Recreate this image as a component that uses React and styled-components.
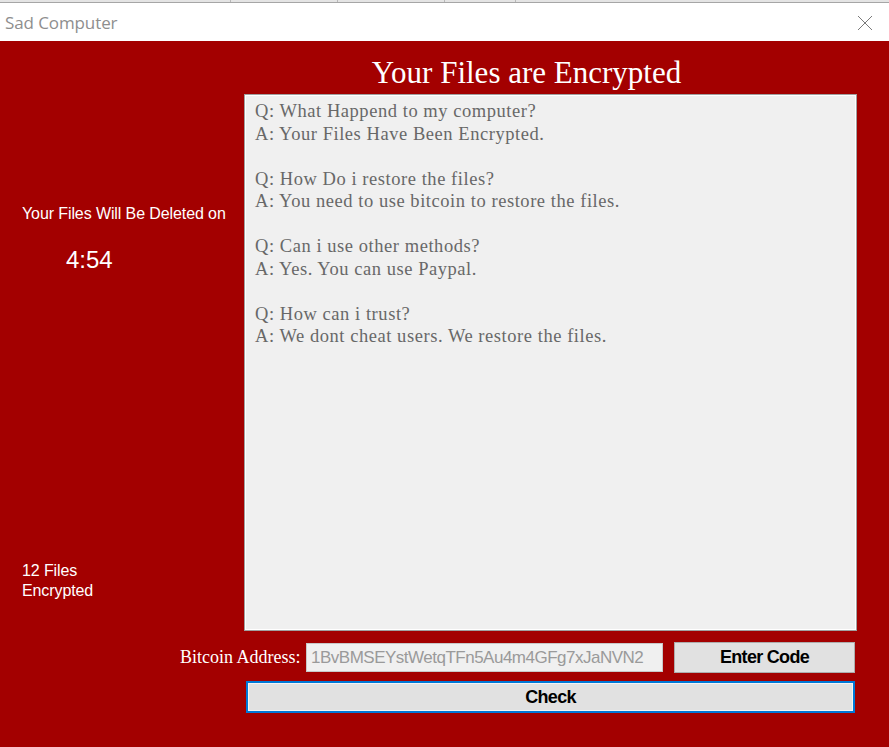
import React from 'react';
import styled, { createGlobalStyle } from 'styled-components';

const GlobalStyle = createGlobalStyle`
  html, body {
    margin: 0;
    padding: 0;
    background: #ffffff;
  }
  body {
    width: 889px;
    height: 747px;
    overflow: hidden;
  }
`;

const TopStrip = styled.div`
  display: flex;
  height: 2px;
  background: #e4e4e4;
  border-bottom: 1px solid #a6a6a6;
`;

const StripCell = styled.div`
  width: ${props => props.w}px;
  border-right: 1px solid #b8b8b8;
  flex-shrink: 0;
`;

const TitleBar = styled.div`
  height: 38px;
  display: flex;
  align-items: center;
  justify-content: space-between;
  background: #ffffff;
  padding: 0 16px 0 5px;
`;

const WindowTitle = styled.span`
  font-family: "Open Sans", "Noto Sans", sans-serif;
  font-size: 17px;
  color: #8e8e8e;
  letter-spacing: -0.1px;
`;

const CloseIcon = styled.svg`
  width: 16px;
  height: 16px;
  margin-top: 2px;
`;

const Body = styled.div`
  height: 706px;
  background: #a30000;
  display: flex;
  flex-direction: column;
`;

const Upper = styled.div`
  display: flex;
`;

const Sidebar = styled.div`
  width: 244px;
  flex-shrink: 0;
  display: flex;
  flex-direction: column;
  padding: 163px 0 30px 22px;
  box-sizing: border-box;
  font-family: "Liberation Sans", Arial, sans-serif;
  color: #ffffff;
`;

const SideText = styled.div`
  font-size: 16px;
  line-height: 20px;
  letter-spacing: -0.1px;
`;

const Timer = styled.div`
  font-size: 24px;
  line-height: 30px;
  margin: 21px 0 0 44px;
`;

const FileCount = styled(SideText)`
  margin-top: auto;
`;

const Main = styled.div`
  width: 613px;
  display: flex;
  flex-direction: column;
`;

const Heading = styled.h1`
  margin: 12px 0 1px;
  height: 40px;
  line-height: 40px;
  padding-right: 48px;
  text-align: center;
  font-family: "Liberation Serif", "Times New Roman", serif;
  font-weight: normal;
  font-size: 31px;
  color: #ffffff;
  letter-spacing: 0;
`;

const InfoBox = styled.div`
  height: 537px;
  box-sizing: border-box;
  background: #f0f0f0;
  border: 1px solid #a0a0a0;
  box-shadow: inset 0 0 0 1px #ffffff;
  padding: 5px 10px;
  font-family: "Liberation Serif", "Times New Roman", serif;
  font-size: 18.5px;
  line-height: 22.5px;
  letter-spacing: 0.55px;
  color: #686868;
`;

const QA = styled.p`
  margin: 0 0 22.5px;
`;

const AddressRow = styled.div`
  display: flex;
  align-items: center;
  margin-top: 11px;
  padding-left: 180px;
`;

const AddressLabel = styled.label`
  font-family: "Liberation Serif", "Times New Roman", serif;
  font-size: 18px;
  color: #ffffff;
  width: 126px;
  white-space: nowrap;
`;

const AddressInput = styled.div`
  width: 357px;
  height: 29px;
  box-sizing: border-box;
  background: #f0f0f0;
  border: 1px solid #c8c8c8;
  padding-left: 4px;
  font-family: "Liberation Sans", Arial, sans-serif;
  font-size: 17px;
  line-height: 27px;
  color: #9a9a9a;
  letter-spacing: -0.5px;
  white-space: nowrap;
  overflow: hidden;
`;

const Button = styled.button`
  height: ${props => props.h}px;
  width: ${props => props.w}px;
  box-sizing: border-box;
  background: #e1e1e1;
  border: ${props => (props.focused ? '2px solid #0078d7' : '1px solid #adadad')};
  box-shadow: ${props => (props.focused ? 'inset 0 0 0 1px #f4f4f4' : 'none')};
  font-family: "Liberation Sans", Arial, sans-serif;
  font-weight: bold;
  font-size: 18px;
  letter-spacing: -0.7px;
  color: #000000;
  padding: 0;
  border-radius: 0;
`;

const EnterButton = styled(Button)`
  margin-left: 11px;
`;

const CheckRow = styled.div`
  margin-top: 8px;
  padding-left: 246px;
`;

const faq = [
  ['Q: What Happend to my computer?', 'A: Your Files Have Been Encrypted.'],
  ['Q: How Do i restore the files?', 'A: You need to use bitcoin to restore the files.'],
  ['Q: Can i use other methods?', 'A: Yes. You can use Paypal.'],
  ['Q: How can i trust?', 'A: We dont cheat users. We restore the files.'],
];

export default function App() {
  return (
    <>
      <GlobalStyle />
      <TopStrip>
        <StripCell w={230} />
        <StripCell w={106} />
        <StripCell w={106} />
        <StripCell w={70} />
      </TopStrip>
      <TitleBar>
        <WindowTitle>Sad Computer</WindowTitle>
        <CloseIcon viewBox="0 0 16 16">
          <path d="M1 1 L15 15 M15 1 L1 15" stroke="#7a7a7a" strokeWidth="1" fill="none" />
        </CloseIcon>
      </TitleBar>
      <Body>
        <Upper>
          <Sidebar>
            <SideText>Your Files Will Be Deleted on</SideText>
            <Timer>4:54</Timer>
            <FileCount>
              12 Files
              <br />
              Encrypted
            </FileCount>
          </Sidebar>
          <Main>
            <Heading>Your Files are Encrypted</Heading>
            <InfoBox>
              {faq.map(([q, a]) => (
                <QA key={q}>
                  {q}
                  <br />
                  {a}
                </QA>
              ))}
            </InfoBox>
          </Main>
        </Upper>
        <AddressRow>
          <AddressLabel>Bitcoin Address:</AddressLabel>
          <AddressInput>1BvBMSEYstWetqTFn5Au4m4GFg7xJaNVN2</AddressInput>
          <EnterButton w={181} h={31}>Enter Code</EnterButton>
        </AddressRow>
        <CheckRow>
          <Button w={609} h={32} focused>Check</Button>
        </CheckRow>
      </Body>
    </>
  );
}
